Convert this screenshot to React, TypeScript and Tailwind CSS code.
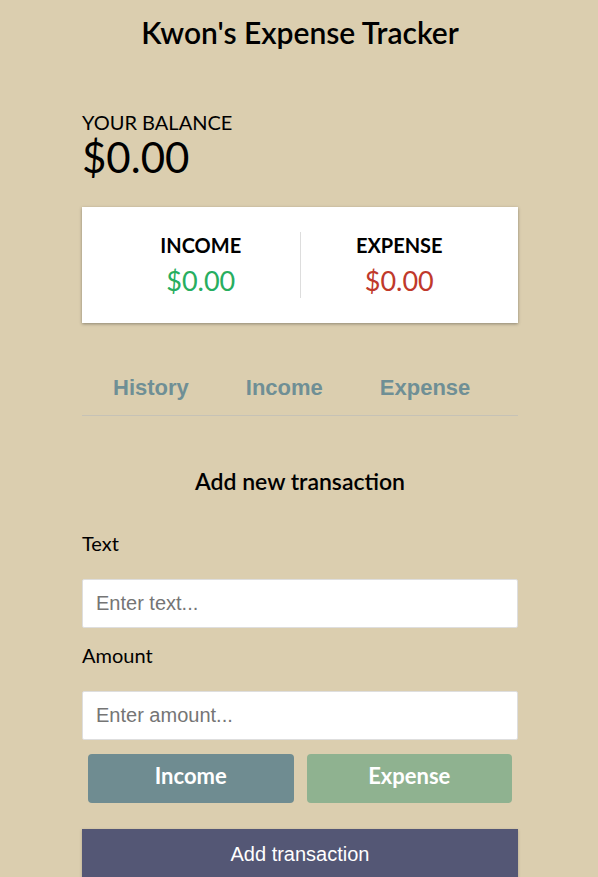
import { useState } from 'react';

export default function App() {
  const [text, setText] = useState('');
  const [amount, setAmount] = useState('');

  return (
    <div className="min-h-screen bg-[#dbceaf] pl-[2px] font-['Lato',sans-serif] text-black">
      <h1 className="pt-[12px] text-center text-[30px] font-semibold leading-[40px]">Kwon's Expense Tracker</h1>

      <div className="mx-auto w-[436px]">
        <h4 className="mt-[58px] text-[20px] leading-[24px] font-normal">YOUR BALANCE</h4>
        <h2 className="text-[42px] leading-[46px] font-normal">$0.00</h2>

        <div className="mt-[27px] flex bg-white px-[20px] py-[25px] shadow-[0_1px_3px_rgba(0,0,0,0.35)]">
          <div className="flex-1 text-center">
            <h4 className="text-[20px] leading-[26px] font-bold">INCOME</h4>
            <p className="mt-[6px] text-[27px] leading-[34px] text-[#27ae60]">$0.00</p>
          </div>
          <div className="w-px bg-[#dddddd]" />
          <div className="flex-1 text-center">
            <h4 className="text-[20px] leading-[26px] font-bold">EXPENSE</h4>
            <p className="mt-[6px] text-[27px] leading-[34px] text-[#c0392b]">$0.00</p>
          </div>
        </div>

        <div className="mt-[52px] flex gap-[57px] border-b border-[#c6c2b6] pb-[15px] pl-[31px] font-['Liberation_Sans',Arial,sans-serif] text-[22px] leading-[25px] font-bold text-[#6f8f95]">
          <button className="cursor-pointer">History</button>
          <button className="cursor-pointer">Income</button>
          <button className="cursor-pointer">Expense</button>
        </div>

        <h3 className="mt-[50px] text-center text-[23px] leading-[30px] font-semibold">Add new transaction</h3>

        <form onSubmit={(e) => e.preventDefault()}>
          <label className="mt-[35px] block text-[20px] leading-[24px]">Text</label>
          <input
            type="text"
            value={text}
            onChange={(e) => setText(e.target.value)}
            placeholder="Enter text..."
            className="mt-[24px] block h-[49px] w-full rounded-[2px] border border-[#dedede] bg-white px-[13px] font-['Liberation_Sans',Arial,sans-serif] text-[20px] text-black placeholder:text-[#757575] outline-none"
          />
          <label className="mt-[15px] block text-[20px] leading-[24px]">Amount</label>
          <input
            type="number"
            value={amount}
            onChange={(e) => setAmount(e.target.value)}
            placeholder="Enter amount..."
            className="mt-[24px] block h-[49px] w-full rounded-[2px] border border-[#dedede] bg-white px-[13px] font-['Liberation_Sans',Arial,sans-serif] text-[20px] text-black placeholder:text-[#757575] outline-none"
          />
          <div className="mt-[14px] flex gap-[13px] px-[6px]">
            <button type="button" className="h-[49px] flex-1 rounded-[4px] bg-[#6f8c91] pb-[6px] text-[22px] font-bold text-white">Income</button>
            <button type="button" className="h-[49px] flex-1 rounded-[4px] bg-[#8fb290] pb-[6px] text-[22px] font-bold text-white">Expense</button>
          </div>
          <button type="submit" className="mt-[26px] block h-[50px] w-full bg-[#545775] font-['Liberation_Sans',Arial,sans-serif] text-[20px] text-white shadow-[0_1px_3px_rgba(0,0,0,0.2)]">
            Add transaction
          </button>
        </form>
      </div>
    </div>
  );
}
